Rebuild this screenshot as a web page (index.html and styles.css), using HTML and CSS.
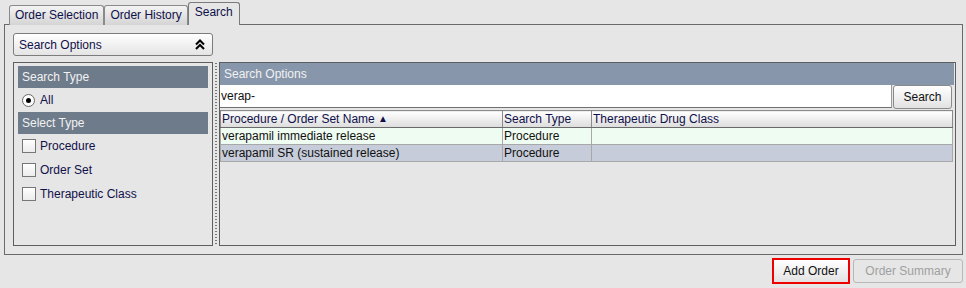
FILE: index.html
```html
<!DOCTYPE html>
<html lang="en">
<head>
  <meta charset="UTF-8" />
  <title>Order Search</title>
  <link rel="stylesheet" href="styles.css">
</head>
<body>
  <div class="tabbar">
    <div class="tab">Order Selection</div>
    <div class="tab">Order History</div>
    <div class="tab active">Search</div>
  </div>
  <div class="tabpanel">
    <div class="dropdown">
      <span>Search Options</span>
      <svg width="10" height="11" viewBox="0 0 10 11"><path d="M1 5.5 L5 1.5 L9 5.5 M1 10 L5 6 L9 10" fill="none" stroke="#000" stroke-width="2"/></svg>
    </div>
    <div class="content">
      <div class="left-panel">
        <div class="section-head">Search Type</div>
        <label class="option"><span class="radio"><span class="dot"></span></span>All</label>
        <div class="section-head">Select Type</div>
        <label class="option"><span class="check"></span>Procedure</label>
        <label class="option"><span class="check"></span>Order Set</label>
        <label class="option"><span class="check"></span>Therapeutic Class</label>
      </div>
      <div class="splitter"></div>
      <div class="right-panel">
        <div class="panel-head">Search Options</div>
        <div class="search-row">
          <div class="search-input">verap-</div>
          <button class="btn search-btn">Search</button>
        </div>
        <table class="results">
          <thead>
            <tr>
              <th class="col-name">Procedure / Order Set Name <span class="sort">&#9650;</span></th>
              <th class="col-type">Search Type</th>
              <th>Therapeutic Drug Class</th>
            </tr>
          </thead>
          <tbody>
            <tr class="row-a"><td>verapamil immediate release</td><td>Procedure</td><td></td></tr>
            <tr class="row-b"><td>verapamil SR (sustained release)</td><td>Procedure</td><td></td></tr>
          </tbody>
        </table>
      </div>
    </div>
  </div>
  <div class="actions">
    <button class="btn add-order">Add Order</button>
    <button class="btn disabled">Order Summary</button>
  </div>
</body>
</html>
```

FILE: styles.css
```css
body {
  margin: 0;
  background: #e6e6e6;
  font-family: "Liberation Sans", Arial, sans-serif;
  font-size: 12px;
  color: #111;
  width: 966px;
  height: 288px;
  overflow: hidden;
}

.tabbar {
  display: flex;
  align-items: flex-end;
  height: 24px;
  padding-left: 9px;
}

.tab {
  height: 19px;
  line-height: 19px;
  padding: 0 5px;
  border: 1px solid #8a8a8a;
  border-bottom: none;
  border-radius: 3px 3px 0 0;
  background: linear-gradient(#f4f4f4, #d4d4d4);
  position: relative;
  top: 1px;
  color: #10104a;
}

.tab.active {
  height: 22px;
  line-height: 18px;
  padding: 0 6px;
  background: #e6e6e6;
  border-color: #7a7a7a;
  z-index: 1;
}

.tabpanel {
  margin: 0 3px 0 4px;
  height: 213px;
  border: 1px solid #6a6a6a;
  padding: 8px 6px 8px 8px;
}

.dropdown {
  width: 186px;
  height: 21px;
  border: 1px solid #7c7c7c;
  border-radius: 3px;
  background: linear-gradient(#ffffff, #e4e4e4);
  display: flex;
  align-items: center;
  justify-content: space-between;
  padding: 0 7px 0 5px;
  color: #10104a;
}

.content {
  display: flex;
  margin-top: 6px;
  height: 184px;
}

.left-panel {
  width: 190px;
  border: 1px solid #5e5e5e;
  padding: 3px 4px;
}

.section-head {
  height: 22px;
  line-height: 22px;
  background: #6e7b8a;
  color: #f2f2f2;
  padding-left: 4px;
}

.option {
  display: flex;
  align-items: center;
  height: 24px;
  padding-left: 4px;
  color: #10104a;
}

.radio {
  width: 11px;
  height: 11px;
  border: 1px solid #666;
  border-radius: 50%;
  background: #fff;
  display: flex;
  align-items: center;
  justify-content: center;
  margin-right: 5px;
}

.dot {
  width: 5px;
  height: 5px;
  border-radius: 50%;
  background: #000;
}

.check {
  width: 12px;
  height: 12px;
  border: 1px solid #777;
  background: linear-gradient(#ffffff, #ececec);
  margin-right: 4px;
}

.splitter {
  width: 6px;
  background: radial-gradient(circle, #777 0.6px, transparent 0.8px) 0 0 / 6px 3px repeat-y;
}

.right-panel {
  flex: 1;
  border: 1px solid #5e5e5e;
  padding: 0 1px 0 0;
}

.panel-head {
  height: 22px;
  line-height: 22px;
  background: #8796ab;
  color: #f2f2f2;
  padding-left: 4px;
}

.search-row {
  display: flex;
  height: 24px;
}

.search-input {
  flex: 1;
  background: #fff;
  border-bottom: 1px solid #707070;
  border-right: 1px solid #9a9a9a;
  height: 22px;
  line-height: 22px;
  padding-left: 1px;
}

.btn {
  font-family: "Liberation Sans", Arial, sans-serif;
  font-size: 12px;
  color: #111;
  border: 1px solid #8a8a8a;
  border-radius: 3px;
  background: linear-gradient(#ffffff, #e2e2e2);
  padding: 0;
}

.search-btn {
  width: 59px;
  height: 24px;
  margin-left: 1px;
  margin-right: 2px;
}

.results {
  border-collapse: collapse;
  width: 733px;
  margin-top: 1px;
  table-layout: fixed;
}

.results th,
.results td {
  height: 16px;
  padding: 0 1px;
  text-align: left;
  font-weight: normal;
  border: 1px solid #a8a8a8;
  white-space: nowrap;
  overflow: hidden;
}

.results th {
  background: linear-gradient(#ffffff, #dcdcdc);
  border-color: #8a8a8a;
  border-bottom: 1px solid #6a6a6a;
  color: #10104a;
}

.col-name {
  width: 279px;
}

.col-type {
  width: 86px;
}

.sort {
  font-size: 10px;
  vertical-align: 1px;
}

.row-a td {
  background: #effcf1;
}

.row-b td {
  background: #c6ccd9;
}

.actions {
  display: flex;
  justify-content: flex-end;
  gap: 3px;
  padding: 3px 3px 0 0;
}

.add-order {
  width: 78px;
  height: 26px;
  border: 2px solid #ee0000;
  border-radius: 0;
}

.disabled {
  width: 110px;
  height: 24px;
  margin-top: 1px;
  color: #a0a0a0;
  border-color: #b8b8b8;
  background: #e6e6e6;
}
```
